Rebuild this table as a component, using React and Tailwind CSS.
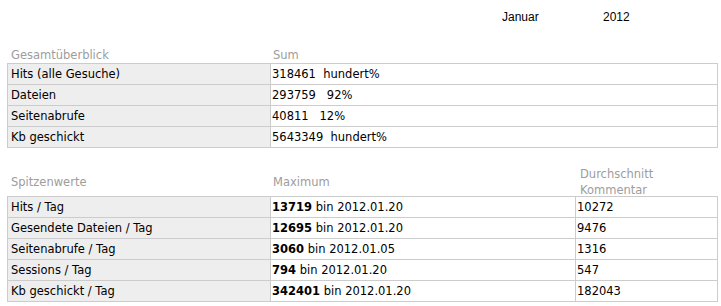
import React from "react";

const font = { fontFamily: '"DejaVu Sans", Verdana, sans-serif' };

const t1 = [
  ["Hits (alle Gesuche)", "318461\u00a0\u00a0hundert%"],
  ["Dateien", "293759\u00a0\u00a0\u00a092%"],
  ["Seitenabrufe", "40811\u00a0\u00a0\u00a012%"],
  ["Kb geschickt", "5643349\u00a0\u00a0hundert%"],
];

const t2 = [
  ["Hits / Tag", "13719", "2012.01.20", "10272"],
  ["Gesendete Dateien / Tag", "12695", "2012.01.20", "9476"],
  ["Seitenabrufe / Tag", "3060", "2012.01.05", "1316"],
  ["Sessions / Tag", "794", "2012.01.20", "547"],
  ["Kb geschickt / Tag", "342401", "2012.01.20", "182043"],
];

export default function App() {
  return (
    <div className="w-[721px] h-[306px] bg-white text-black overflow-hidden">
      <div
        className="h-[46px] pt-[10px] pl-[502px] flex text-[12px] leading-[14px]"
        style={{ fontFamily: '"Liberation Sans", Arial, sans-serif' }}
      >
        <div className="w-[101px]">Januar</div>
        <div>2012</div>
      </div>

      <div className="ml-[7px] w-[711px] text-[11.5px]" style={font}>
        <div className="grid grid-cols-[264px_447px] h-[17px] pt-[2px] leading-[15px] text-[#9d9d9d]">
          <div className="pl-[4px]">Gesamtüberblick</div>
          <div className="pl-[2px]">Sum</div>
        </div>
        <div className="border-t border-l border-[#cccccc]">
          {t1.map((r) => (
            <div key={r[0]} className="grid grid-cols-[263px_447px] h-[21px] border-b border-[#cccccc] leading-[20px]">
              <div className="bg-[#eeeeee] border-r border-[#cccccc] pl-[3px] whitespace-nowrap">{r[0]}</div>
              <div className="border-r border-[#cccccc] pl-[1px] whitespace-nowrap">{r[1]}</div>
            </div>
          ))}
        </div>

        <div className="mt-[18px] grid grid-cols-[264px_305px_142px] h-[30px] items-center leading-[16px] text-[#9d9d9d]">
          <div className="pl-[4px]">Spitzenwerte</div>
          <div className="pl-[2px]">Maximum</div>
          <div className="pl-[4px]">
            Durchschnitt
            <br />
            Kommentar
          </div>
        </div>
        <div className="border-t border-l border-[#cccccc]">
          {t2.map((r) => (
            <div key={r[0]} className="grid grid-cols-[263px_305px_142px] h-[21px] border-b border-[#cccccc] leading-[20px]">
              <div className="bg-[#eeeeee] border-r border-[#cccccc] pl-[3px] whitespace-nowrap">{r[0]}</div>
              <div className="border-r border-[#cccccc] pl-[1px] whitespace-nowrap">
                <span className="font-bold">{r[1]}</span> bin {r[2]}
              </div>
              <div className="border-r border-[#cccccc] pl-[1px] whitespace-nowrap">{r[3]}</div>
            </div>
          ))}
        </div>
      </div>
    </div>
  );
}
